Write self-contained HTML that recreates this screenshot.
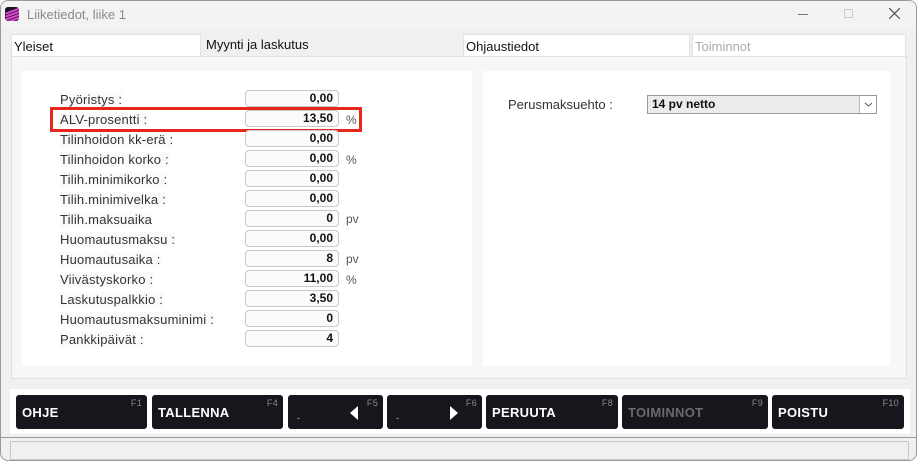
<!DOCTYPE html>
<html><head><meta charset="utf-8"><style>
*{margin:0;padding:0;box-sizing:border-box}
body{width:918px;height:462px;background:#fff;font-family:"Liberation Sans",sans-serif;overflow:hidden;position:relative}
.win{position:absolute;left:0;top:0;width:917px;height:461px;border:1px solid #9a9a9a;border-radius:8px;background:#f0f0f0;overflow:hidden}
.title{position:absolute;left:0;top:0;width:100%;height:28px;background:#f3f3f3}
.title span{position:absolute;left:26px;top:6px;font-size:13px;color:#8a8a8a}
.logo{position:absolute;left:4px;top:6px;width:14px;height:14px;border-radius:3px;background:linear-gradient(160deg,#1a1024,#3a1740);overflow:hidden}
.logo i{position:absolute;left:0;width:16px;height:1.5px;background:#e04ad0;transform:rotate(-20deg)}
.tab{position:absolute;top:33px;height:22px;background:#fff;border:1px solid #e2e2e2;border-bottom:none;font-size:13px;padding:4px 0 0 2px;color:#111}
.panel{position:absolute;left:10px;top:55px;width:896px;height:323px;background:#f7f7f7;border:1px solid #e0e0e0}
.inner{position:absolute;background:#fff}
.lbl{position:absolute;left:59px;font-size:13px;color:#333;background:#fafafa;letter-spacing:0.2px}
.inp{position:absolute;left:244px;width:94px;height:17px;border:1px solid #c8c8c8;border-radius:4px;background:#fbfbfb;font-size:12px;text-align:right;padding-right:5px;line-height:15px;color:#111;font-weight:bold}
.u{position:absolute;left:345px;font-size:12px;color:#555}
.bar{position:absolute;left:9px;top:388px;width:900px;height:45px;background:#fff}
.b{position:absolute;top:394px;height:34px;background:#15171d;border-radius:3px;color:#fff;font-weight:bold;font-size:13px;letter-spacing:0.3px}
.b .t{position:absolute;left:6px;top:10px}
.b .f{position:absolute;right:5px;top:3px;font-size:9px;color:#8a8a8a;font-weight:normal}
.b .d{position:absolute;left:9px;top:18px;font-size:9px;color:#888}
.status{position:absolute;left:9px;top:440px;width:899px;height:19px;border:1px solid #c8c8c8;background:#f0f0f0}
</style></head><body>
<div class="win">
<div class="title"><div class="logo"><i style="top:3px"></i><i style="top:6px"></i><i style="top:9px"></i><i style="top:12px"></i></div><span>Liiketiedot, liike 1</span>
<div style="position:absolute;left:797px;top:13px;width:10px;height:1px;background:#777"></div>
<div style="position:absolute;left:843px;top:8px;width:9px;height:9px;border:1px solid #ccc"></div>
<svg style="position:absolute;left:888px;top:7px" width="11" height="11"><path d="M0 0L11 11M11 0L0 11" stroke="#555" stroke-width="1.2"/></svg>
</div>
<div class="tab" style="left:10px;width:190px">Yleiset</div>
<div style="position:absolute;left:205px;top:36px;font-size:13px;color:#111">Myynti ja laskutus</div>
<div class="tab" style="left:462px;width:227px">Ohjaustiedot</div>
<div class="tab" style="left:691px;width:214px;color:#aaa">Toiminnot</div>
<div class="panel"></div>
<div class="inner" style="left:21px;top:70px;width:450px;height:295px"></div>
<div class="inner" style="left:482px;top:70px;width:407px;height:295px"></div>
<div style="position:absolute;left:49px;top:106px;width:312px;height:25px;border:3px solid #e8261c"></div>
<div class="lbl" style="top:91px">Pyöristys :</div><div class="inp" style="top:89px">0,00</div>
<div class="lbl" style="top:111px">ALV-prosentti :</div><div class="inp" style="top:109px">13,50</div><div class="u" style="top:112px">%</div>
<div class="lbl" style="top:131px">Tilinhoidon kk-erä :</div><div class="inp" style="top:129px">0,00</div>
<div class="lbl" style="top:151px">Tilinhoidon korko :</div><div class="inp" style="top:149px">0,00</div><div class="u" style="top:152px">%</div>
<div class="lbl" style="top:171px">Tilih.minimikorko :</div><div class="inp" style="top:169px">0,00</div>
<div class="lbl" style="top:191px">Tilih.minimivelka :</div><div class="inp" style="top:189px">0,00</div>
<div class="lbl" style="top:211px">Tilih.maksuaika</div><div class="inp" style="top:209px">0</div><div class="u" style="top:211px">pv</div>
<div class="lbl" style="top:231px">Huomautusmaksu :</div><div class="inp" style="top:229px">0,00</div>
<div class="lbl" style="top:251px">Huomautusaika :</div><div class="inp" style="top:249px">8</div><div class="u" style="top:251px">pv</div>
<div class="lbl" style="top:271px">Viivästyskorko :</div><div class="inp" style="top:269px">11,00</div><div class="u" style="top:272px">%</div>
<div class="lbl" style="top:291px">Laskutuspalkkio :</div><div class="inp" style="top:289px">3,50</div>
<div class="lbl" style="top:311px">Huomautusmaksuminimi :</div><div class="inp" style="top:309px">0</div>
<div class="lbl" style="top:331px">Pankkipäivät :</div><div class="inp" style="top:329px">4</div>
<div style="position:absolute;left:507px;top:96px;font-size:13px;color:#333">Perusmaksuehto :</div>
<div style="position:absolute;left:646px;top:94px;width:230px;height:19px;border:1px solid #999;background:#ececec;font-size:12px;font-weight:bold;padding:1px 4px;color:#111">14 pv netto<div style="position:absolute;right:0;top:0;width:17px;height:17px;background:#fff;border-left:1px solid #bbb"><svg width="17" height="17"><path d="M5 7L8.5 10L12 7" stroke="#555" fill="none"/></svg></div></div>
<div class="bar"></div>
<div class="b" style="left:15px;width:131px"><span class="t">OHJE</span><span class="f">F1</span></div>
<div class="b" style="left:151px;width:131px"><span class="t">TALLENNA</span><span class="f">F4</span></div>
<div class="b" style="left:287px;width:95px"><span class="d">-</span><span class="f">F5</span><svg style="position:absolute;left:62px;top:11px" width="8" height="14"><path d="M8 0L0 7L8 14Z" fill="#fff"/></svg></div>
<div class="b" style="left:386px;width:95px"><span class="d">-</span><span class="f">F6</span><svg style="position:absolute;left:63px;top:11px" width="8" height="14"><path d="M0 0L8 7L0 14Z" fill="#fff"/></svg></div>
<div class="b" style="left:485px;width:132px"><span class="t">PERUUTA</span><span class="f">F8</span></div>
<div class="b" style="left:621px;width:146px"><span class="t" style="color:#6b6b6b">TOIMINNOT</span><span class="f">F9</span></div>
<div class="b" style="left:771px;width:132px"><span class="t">POISTU</span><span class="f">F10</span></div>
<div style="position:absolute;left:0;top:436px;width:100%;height:1px;background:#999"></div>
<div class="status"></div>
</div>
</body></html>
